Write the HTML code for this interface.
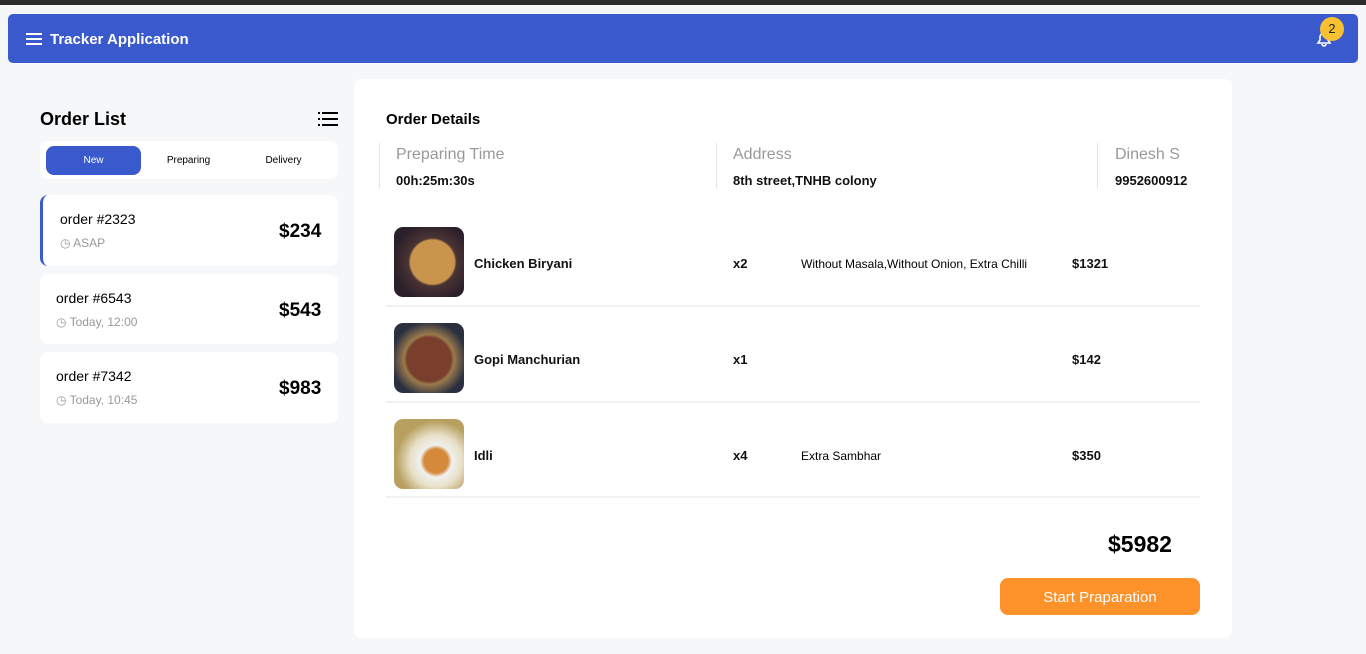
<!DOCTYPE html>
<html><head><style>
*{box-sizing:border-box;margin:0;padding:0}
body{width:1366px;height:654px;background:#f6f7f9;font-family:"Liberation Sans",sans-serif;position:relative;overflow:hidden;color:#000}
.top{position:absolute;left:0;top:0;width:1366px;height:5px;background:#2b2b2b}
.hdr{position:absolute;left:8px;top:14px;width:1350px;height:49px;background:#3a59cd;border-radius:5px}
.abs{position:absolute}
.card{position:absolute;background:#fff;border-radius:8px}
.sep{position:absolute;width:1px;background:#e3e3e3}
.line{position:absolute;left:386px;width:814px;height:2px;background:#f1f1f1}
.img{position:absolute;left:394px;width:70px;height:70px;border-radius:9px}
.t14{font-size:14px}
.sb{font-size:13px;font-weight:bold;color:#111}
</style></head><body>
<div class="top"></div>
<div class="hdr"></div>
<div class="abs" style="left:26px;top:33px;width:16px;height:2px;background:#fff;box-shadow:0 5px 0 #fff,0 10px 0 #fff"></div>
<div class="abs" style="left:50px;top:31px;color:#fff;font-weight:bold;font-size:15px">Tracker Application</div>
<svg class="abs" style="left:1314px;top:28px" width="20" height="20" viewBox="0 0 20 20"><path d="M4 15h12l-2-3V9a4 4 0 0 0-8 0v3z M8 16a2 2 0 0 0 4 0" fill="none" stroke="#fff" stroke-width="1.6"/></svg>
<div class="abs" style="left:1320px;top:17px;width:24px;height:24px;border-radius:50%;background:#f8c131;font-size:13px;text-align:center;line-height:24px;color:#222">2</div>

<div class="abs" style="left:40px;top:109px;font-size:18px;font-weight:bold">Order List</div>
<svg class="abs" style="left:318px;top:111px" width="20" height="16"><g fill="#000"><rect x="0" y="1" width="2" height="2"/><rect x="0" y="7" width="2" height="2"/><rect x="0" y="13" width="2" height="2"/><rect x="4" y="1" width="16" height="2"/><rect x="4" y="7" width="16" height="2"/><rect x="4" y="13" width="16" height="2"/></g></svg>
<div class="card" style="left:40px;top:141px;width:298px;height:38px"></div>
<div class="abs" style="left:46px;top:146px;width:95px;height:29px;background:#3a59cd;border-radius:8px;color:#fff;font-size:10px;text-align:center;line-height:29px">New</div>
<div class="abs" style="left:141px;top:146px;width:95px;line-height:29px;font-size:10px;text-align:center">Preparing</div>
<div class="abs" style="left:236px;top:146px;width:95px;line-height:29px;font-size:10px;text-align:center">Delivery</div>

<div class="card" style="left:40px;top:195px;width:298px;height:71px;border-left:3px solid #3a59cd"></div>
<div class="abs t14" style="left:60px;top:211px">order #2323</div>
<div class="abs" style="left:60px;top:236px;font-size:12px;color:#999">◷ ASAP</div>
<div class="abs" style="left:279px;top:221px;font-size:19px;font-weight:bold">$234</div>
<div class="card" style="left:40px;top:274px;width:298px;height:70px"></div>
<div class="abs t14" style="left:56px;top:290px">order #6543</div>
<div class="abs" style="left:56px;top:315px;font-size:12px;color:#999">◷ Today, 12:00</div>
<div class="abs" style="left:279px;top:300px;font-size:19px;font-weight:bold">$543</div>
<div class="card" style="left:40px;top:352px;width:298px;height:71px"></div>
<div class="abs t14" style="left:56px;top:368px">order #7342</div>
<div class="abs" style="left:56px;top:393px;font-size:12px;color:#999">◷ Today, 10:45</div>
<div class="abs" style="left:279px;top:378px;font-size:19px;font-weight:bold">$983</div>

<div class="card" style="left:354px;top:79px;width:878px;height:559px"></div>
<div class="abs" style="left:386px;top:111px;font-size:15px;font-weight:bold">Order Details</div>
<div class="sep" style="left:379px;top:143px;height:45px"></div>
<div class="sep" style="left:716px;top:143px;height:45px"></div>
<div class="sep" style="left:1097px;top:143px;height:45px"></div>
<div class="abs" style="left:396px;top:146px;font-size:16px;color:#999">Preparing Time</div>
<div class="abs sb" style="left:396px;top:173px">00h:25m:30s</div>
<div class="abs" style="left:733px;top:146px;font-size:16px;color:#999">Address</div>
<div class="abs sb" style="left:733px;top:173px">8th street,TNHB colony</div>
<div class="abs" style="left:1115px;top:146px;font-size:16px;color:#999">Dinesh S</div>
<div class="abs sb" style="left:1115px;top:173px">9952600912</div>

<div class="img" style="top:227px;background:radial-gradient(circle at 55% 50%,#c9954c 0 22px,#4a3434 24px,#2b1f2a 40px)"></div>
<div class="abs sb" style="left:474px;top:256px">Chicken Biryani</div>
<div class="abs sb" style="left:733px;top:256px">x2</div>
<div class="abs" style="left:801px;top:257px;font-size:12px">Without Masala,Without Onion, Extra Chilli</div>
<div class="abs sb" style="left:1072px;top:256px">$1321</div>
<div class="line" style="top:305px"></div>
<div class="img" style="top:323px;background:radial-gradient(circle at 50% 52%,#7a3e2c 0 22px,#9a7a4c 25px,#2a3040 38px)"></div>
<div class="abs sb" style="left:474px;top:352px">Gopi Manchurian</div>
<div class="abs sb" style="left:733px;top:352px">x1</div>
<div class="abs sb" style="left:1072px;top:352px">$142</div>
<div class="line" style="top:401px"></div>
<div class="img" style="top:419px;background:radial-gradient(circle at 60% 60%,#d48a3a 0 12px,#f0f0ee 16px,#e8e0c8 26px,#b8a060 40px)"></div>
<div class="abs sb" style="left:474px;top:448px">Idli</div>
<div class="abs sb" style="left:733px;top:448px">x4</div>
<div class="abs" style="left:801px;top:449px;font-size:12px">Extra Sambhar</div>
<div class="abs sb" style="left:1072px;top:448px">$350</div>
<div class="line" style="top:496px"></div>

<div class="abs" style="left:1108px;top:531px;font-size:23px;font-weight:bold">$5982</div>
<div class="abs" style="left:1000px;top:578px;width:200px;height:37px;background:#fd912a;border-radius:8px;color:#fff;font-size:15px;text-align:center;line-height:39px">Start Praparation</div>
</body></html>
